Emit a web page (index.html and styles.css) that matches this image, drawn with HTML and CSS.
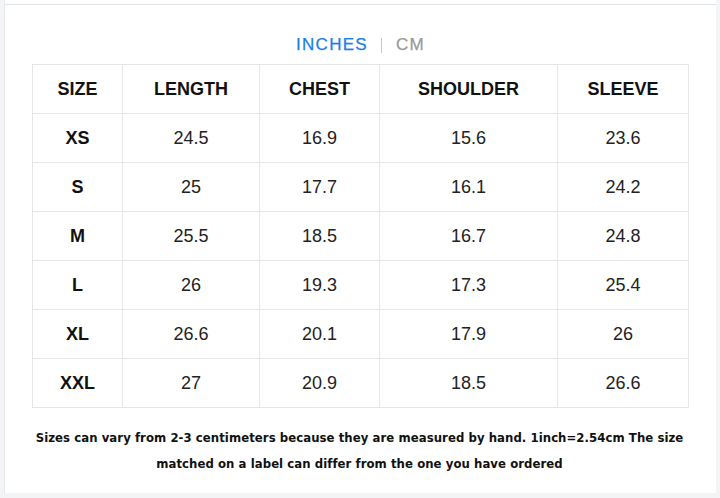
FILE: index.html
```html
<!DOCTYPE html>
<html>
<head>
<meta charset="utf-8">
<link rel="stylesheet" href="styles.css">
</head>
<body>
<div class="panel">
  <div class="tabs">
    <span class="tab active">INCHES</span>
    <span class="sep"></span>
    <span class="tab">CM</span>
  </div>
  <table class="chart">
    <colgroup>
      <col class="c1"><col class="c2"><col class="c3"><col class="c4"><col class="c5">
    </colgroup>
    <tr class="head"><th>SIZE</th><th>LENGTH</th><th>CHEST</th><th>SHOULDER</th><th>SLEEVE</th></tr>
    <tr><th>XS</th><td>24.5</td><td>16.9</td><td>15.6</td><td>23.6</td></tr>
    <tr><th>S</th><td>25</td><td>17.7</td><td>16.1</td><td>24.2</td></tr>
    <tr><th>M</th><td>25.5</td><td>18.5</td><td>16.7</td><td>24.8</td></tr>
    <tr><th>L</th><td>26</td><td>19.3</td><td>17.3</td><td>25.4</td></tr>
    <tr><th>XL</th><td>26.6</td><td>20.1</td><td>17.9</td><td>26</td></tr>
    <tr><th>XXL</th><td>27</td><td>20.9</td><td>18.5</td><td>26.6</td></tr>
  </table>
  <p class="note">Sizes can vary from 2-3 centimeters because they are measured by hand. 1inch=2.54cm The size matched on a label can differ from the one you have ordered</p>
</div>
</body>
</html>
```
FILE: styles.css
```css
html, body {
  margin: 0;
  padding: 0;
  background: #f3f4f6;
  height: 498px;
  overflow: hidden;
}
.panel {
  margin: 0 4px;
  width: 712px;
  height: 493px;
  background: #fff;
  border-left: 1px solid #e6e8ec;
  box-sizing: border-box;
  padding-top: 4px;
  font-family: "Liberation Sans", Arial, sans-serif;
}
.panel::before {
  content: "";
  display: block;
  height: 1px;
  background: #dfe3ea;
}
.tabs {
  display: flex;
  justify-content: center;
  align-items: center;
  height: 20px;
  margin-top: 30px;
  margin-bottom: 9px;
}
.tab {
  font-size: 17px;
  letter-spacing: 1.3px;
  color: #999;
  line-height: 20px;
  -webkit-text-stroke: 0.25px currentColor;
}
.tab.active {
  color: #1a7ee6;
}
.sep {
  width: 1px;
  height: 15px;
  background: #c8c8c8;
  margin: 0 14px 0 13px;
}
.chart {
  margin-left: 27px;
  border-collapse: collapse;
  table-layout: fixed;
  width: 657px;
}
.c1 { width: 90px; }
.c2 { width: 137px; }
.c3 { width: 120px; }
.c4 { width: 178px; }
.c5 { width: 131px; }
.chart th, .chart td {
  border: 1px solid #e6e6e6;
  height: 48px;
  padding: 0;
  text-align: center;
  font-size: 18px;
  color: #222;
}
.chart th {
  font-weight: bold;
  color: #111;
}
.chart td {
  font-weight: normal;
}
.note {
  margin: 17px 30px 0 28px;
  text-align: center;
  font-family: "DejaVu Sans Condensed", "DejaVu Sans", sans-serif;
  font-stretch: condensed;
  font-size: 13px;
  font-weight: bold;
  letter-spacing: 0.06px;
  line-height: 26px;
  color: #111;
}
```
